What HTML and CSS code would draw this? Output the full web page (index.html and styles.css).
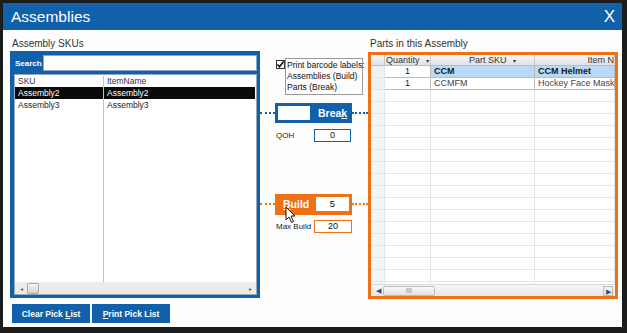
FILE: index.html
```html
<!DOCTYPE html>
<html lang="en">
<head>
  <meta charset="UTF-8">
  <title>Assemblies</title>
  <link rel="stylesheet" href="styles.css">
</head>
<body>
  <div class="window">
    <div class="titlebar">
      <span class="title">Assemblies</span>
      <span class="close">X</span>
    </div>
    <div class="content">
      <div class="left-col">
        <div class="section-label">Assembly SKUs</div>
        <div class="sku-box">
          <div class="search-row">
            <span class="search-label">Search</span>
            <div class="search-input"></div>
          </div>
          <div class="sku-list">
            <div class="sku-rows">
              <div class="sku-row head"><span class="c1">SKU</span><span class="c2">ItemName</span></div>
              <div class="sku-row selected"><span class="c1">Assembly2</span><span class="c2">Assembly2</span></div>
              <div class="sku-row"><span class="c1">Assembly3</span><span class="c2">Assembly3</span></div>
              <div class="sku-fill"><span class="c1"></span><span class="c2"></span></div>
            </div>
            <div class="hscroll">
              <span class="arrow">&#9666;</span>
              <span class="thumb small"></span>
              <span class="track"></span>
              <span class="arrow">&#9656;</span>
            </div>
          </div>
        </div>
        <div class="buttons">
          <button class="btn">Clear Pick <u>L</u>ist</button>
          <button class="btn"><u>P</u>rint Pick List</button>
        </div>
      </div>

      <div class="mid-col">
        <div class="print-opt">
          <span class="checkbox">
            <svg width="9" height="9" viewBox="0 0 9 9"><path d="M1.5 4.5 L3.5 6.8 L7.6 1.6" fill="none" stroke="#111" stroke-width="1.6"/></svg>
          </span>
          <div class="print-label">Print barcode labels:<br>Assemblies (Build)<br>Parts (Break)</div>
        </div>

        <div class="action-row blue">
          <span class="dots"></span>
          <div class="action-box">
            <div class="action-input"></div>
            <span class="action-text">Brea<u>k</u></span>
          </div>
          <span class="dots"></span>
        </div>
        <div class="field-row">
          <span class="field-label">QOH</span>
          <div class="field-box blue">0</div>
        </div>

        <div class="action-row orange">
          <span class="dots"></span>
          <div class="action-box">
            <span class="action-text"><u>B</u>uild</span>
            <div class="action-input">5</div>
            <svg class="cursor" width="12" height="18" viewBox="0 0 12 18"><path d="M1 1 L1 14 L4 11 L6.5 16.5 L8.5 15.5 L6 10 L10 10 Z" fill="#fff" stroke="#111" stroke-width="1"/></svg>
          </div>
          <span class="dots"></span>
        </div>
        <div class="field-row">
          <span class="field-label">Max Build</span>
          <div class="field-box orange">20</div>
        </div>
      </div>

      <div class="right-col">
        <div class="section-label">Parts in this Assembly</div>
        <div class="parts-box">
          <div class="grid">
            <div class="grid-row grid-head">
              <span class="rh corner"></span>
              <span class="qty">Quantity <i>&#9662;</i></span>
              <span class="psku">Part SKU <i>&#9662;</i></span>
              <span class="iname">Item N</span>
            </div>
            <div class="grid-row data current">
              <span class="rh"></span><span class="qty">1</span><span class="psku">CCM</span><span class="iname">CCM Helmet</span>
            </div>
            <div class="grid-row data">
              <span class="rh"></span><span class="qty">1</span><span class="psku">CCMFM</span><span class="iname">Hockey Face Mask - CCM</span>
            </div>
            <div class="grid-row empty"><span class="rh"></span><span class="qty"></span><span class="psku"></span><span class="iname"></span></div>
            <div class="grid-row empty"><span class="rh"></span><span class="qty"></span><span class="psku"></span><span class="iname"></span></div>
            <div class="grid-row empty"><span class="rh"></span><span class="qty"></span><span class="psku"></span><span class="iname"></span></div>
            <div class="grid-row empty"><span class="rh"></span><span class="qty"></span><span class="psku"></span><span class="iname"></span></div>
            <div class="grid-row empty"><span class="rh"></span><span class="qty"></span><span class="psku"></span><span class="iname"></span></div>
            <div class="grid-row empty"><span class="rh"></span><span class="qty"></span><span class="psku"></span><span class="iname"></span></div>
            <div class="grid-row empty"><span class="rh"></span><span class="qty"></span><span class="psku"></span><span class="iname"></span></div>
            <div class="grid-row empty"><span class="rh"></span><span class="qty"></span><span class="psku"></span><span class="iname"></span></div>
            <div class="grid-row empty"><span class="rh"></span><span class="qty"></span><span class="psku"></span><span class="iname"></span></div>
            <div class="grid-row empty"><span class="rh"></span><span class="qty"></span><span class="psku"></span><span class="iname"></span></div>
            <div class="grid-row empty"><span class="rh"></span><span class="qty"></span><span class="psku"></span><span class="iname"></span></div>
            <div class="grid-row empty"><span class="rh"></span><span class="qty"></span><span class="psku"></span><span class="iname"></span></div>
            <div class="grid-row empty"><span class="rh"></span><span class="qty"></span><span class="psku"></span><span class="iname"></span></div>
            <div class="grid-row empty"><span class="rh"></span><span class="qty"></span><span class="psku"></span><span class="iname"></span></div>
            <div class="grid-row empty"><span class="rh"></span><span class="qty"></span><span class="psku"></span><span class="iname"></span></div>
            <div class="grid-row empty"><span class="rh"></span><span class="qty"></span><span class="psku"></span><span class="iname"></span></div>
            <div class="grid-row empty"><span class="rh"></span><span class="qty"></span><span class="psku"></span><span class="iname"></span></div>
          </div>
          <div class="hscroll grid-scroll">
            <span class="arrow dark">&#9664;</span>
            <span class="thumb wide"><i></i></span>
            <span class="track"></span>
            <span class="arrow dark boxed">&#9654;</span>
          </div>
        </div>
      </div>
    </div>
  </div>
</body>
</html>
```

FILE: styles.css
```css
* {
  box-sizing: border-box;
}
body {
  margin: 0;
  width: 627px;
  height: 333px;
  overflow: hidden;
  background-color: #1c1c1c;
  font-family: "Liberation Sans", Arial, sans-serif;
}
.window {
  width: 627px;
  height: 333px;
  border-style: solid;
  border-color: #1c1c1c;
  border-width: 3px 5px 6px 3px;
  background-color: #fdfdfd;
  display: flex;
  flex-direction: column;
}
.titlebar {
  height: 27px;
  background-color: #1160aa;
  color: white;
  display: flex;
  align-items: center;
  justify-content: space-between;
  padding: 0 7px 0 8px;
}
.title {
  font-size: 15.5px;
}
.close {
  font-size: 17px;
}
.content {
  flex: 1;
  display: flex;
  padding: 6px 2px 3px 7px;
}
.section-label {
  font-size: 10px;
  color: #333;
  height: 15px;
  line-height: 15px;
  padding-left: 2px;
}

/* left side */
.left-col {
  width: 250px;
  display: flex;
  flex-direction: column;
}
.sku-box {
  height: 247px;
  border: 3px solid #1160aa;
  background-color: #1160aa;
  display: flex;
  flex-direction: column;
}
.search-row {
  display: flex;
  align-items: center;
  height: 18px;
  margin-bottom: 2px;
}
.search-label {
  width: 30px;
  color: white;
  font-size: 8px;
  font-weight: bold;
  padding-left: 2px;
  white-space: nowrap;
}
.search-input {
  flex: 1;
  height: 16px;
  background-color: white;
  border: 1px solid #8aa7c8;
}
.sku-list {
  flex: 1;
  background-color: white;
  border: 1px solid #9ab;
  display: flex;
  flex-direction: column;
  margin-left: 1px;
}
.sku-rows {
  flex: 1;
  display: flex;
  flex-direction: column;
  padding-top: 1px;
}
.sku-row {
  display: flex;
  height: 12px;
  line-height: 12px;
  font-size: 8.5px;
  color: #222;
}
.sku-row.head {
  height: 11px;
  line-height: 11px;
  color: #333;
}
.sku-row.selected {
  background-color: #0a0a0a;
  color: white;
  margin-right: 1px;
}
.sku-fill {
  flex: 1;
  display: flex;
}
.c1 {
  width: 89px;
  padding-left: 3px;
  border-right: 1px solid #c4c4c4;
}
.c2 {
  padding-left: 3px;
}
.hscroll {
  height: 12px;
  background-color: #ebebeb;
  display: flex;
  align-items: center;
  font-size: 6px;
  color: #666;
}
.hscroll .arrow {
  width: 12px;
  text-align: center;
}
.hscroll .track {
  flex: 1;
}
.thumb.small {
  width: 12px;
  height: 11px;
  border: 1px solid #aaa;
  border-radius: 2px;
  background: linear-gradient(#f4f4f4, #d4d4d4);
}
.buttons {
  display: flex;
  gap: 2px;
  margin-top: 6px;
  padding-left: 2px;
}
.btn {
  width: 78px;
  height: 19px;
  padding: 0;
  border: none;
  background-color: #1160aa;
  color: white;
  font-family: "Liberation Sans", Arial, sans-serif;
  font-size: 8.5px;
  font-weight: bold;
}

/* middle */
.mid-col {
  width: 108px;
  display: flex;
  flex-direction: column;
  padding-top: 22px;
}
.print-opt {
  display: flex;
  align-items: flex-start;
  padding-left: 16px;
}
.checkbox {
  width: 9px;
  height: 9px;
  border: 1px solid #333;
  background: white;
  margin-top: 2px;
  display: flex;
}
.checkbox svg {
  margin: -1px;
}
.print-label {
  border: 1px solid #999;
  font-size: 8.5px;
  line-height: 11px;
  padding: 1px;
  color: #111;
  width: 78px;
  white-space: nowrap;
}
.action-row {
  display: flex;
  align-items: center;
  height: 20px;
}
.action-row.blue {
  margin-top: 8px;
}
.action-row.orange {
  margin-top: 52px;
}
.dots {
  width: 15px;
  height: 2px;
  border-top: 2px dotted #1160aa;
}
.orange .dots {
  border-top-color: #f07014;
}
.dots:last-child {
  width: 16px;
}
.action-box {
  width: 77px;
  height: 20px;
  display: flex;
  align-items: center;
  padding: 0 3px;
  position: relative;
}
.blue .action-box {
  background-color: #1160aa;
}
.orange .action-box {
  background-color: #f07014;
  height: 21px;
}
.action-input {
  height: 14px;
  background-color: white;
  font-size: 9.5px;
  text-align: center;
  line-height: 14px;
  color: #111;
}
.blue .action-input {
  width: 32px;
}
.orange .action-input {
  width: 33px;
  margin-left: auto;
}
.action-text {
  color: white;
  font-weight: bold;
  font-size: 10.5px;
}
.blue .action-text {
  margin-left: 8px;
}
.orange .action-text {
  margin-left: 5px;
}
.cursor {
  position: absolute;
  left: 10px;
  top: 12px;
}
.field-row {
  display: flex;
  align-items: center;
  height: 14px;
  margin-top: 5px;
  padding-left: 16px;
}
.field-label {
  font-size: 8px;
  color: #222;
  width: 38px;
  white-space: nowrap;
}
.field-box {
  width: 37px;
  height: 13px;
  font-size: 9px;
  text-align: center;
  line-height: 11px;
  background: white;
  color: #111;
}
.field-box.blue {
  border: 1px solid #1160aa;
}
.field-box.orange {
  border: 1px solid #f07014;
  width: 38px;
}

/* right side */
.right-col {
  width: 250px;
  display: flex;
  flex-direction: column;
}
.parts-box {
  height: 247px;
  margin-top: 1px;
  border: 3px solid #f07014;
  background-color: #f5f7fa;
  display: flex;
  flex-direction: column;
}
.grid {
  flex: 1;
  overflow: hidden;
  display: flex;
  flex-direction: column;
  background-color: white;
}
.grid-row {
  display: flex;
  height: 12px;
  flex-shrink: 0;
  font-size: 9px;
  line-height: 11px;
  color: #222;
  white-space: nowrap;
}
.grid-row span {
  overflow: hidden;
  border-right: 1px solid #e3e6ea;
  border-bottom: 1px solid #e3e6ea;
}
.rh {
  width: 14px;
  background-color: #eef2f7;
}
.qty {
  width: 46px;
  text-align: center;
}
.psku {
  width: 104px;
  padding-left: 3px;
}
.iname {
  flex: 1;
  padding-left: 3px;
}
.grid-head {
  height: 11px;
  line-height: 10px;
  color: #333;
}
.grid-head span {
  background: linear-gradient(#f6f7f9, #dde2e8);
  border-right: 1px solid #c8ccd2;
  border-bottom: 1px solid #b8bcc4;
}
.grid-head i {
  font-style: normal;
  font-size: 6px;
  margin-left: 4px;
}
.grid-head .psku {
  text-align: center;
  padding-left: 20px;
}
.grid-head .iname {
  text-align: right;
  padding-right: 0;
}
.data .qty,
.data .psku,
.data .iname {
  border-color: #bbb;
}
.data .qty {
  background-color: white;
}
.current .psku,
.current .iname {
  background-color: #b9d9f6;
  font-weight: bold;
  color: #1a1a1a;
}
.data:not(.current) .psku,
.data:not(.current) .iname {
  color: #444;
}
.empty .rh {
  background-color: #f2f5f9;
}
.grid-scroll {
  background: linear-gradient(#f7f7f7, #e6e6e6);
  border-top: 1px solid #d8d8d8;
  height: 12px;
  padding: 0 2px;
}
.grid-scroll .arrow {
  width: 10px;
  color: #2a4f80;
  font-size: 7px;
}
.arrow.boxed {
  border: 1px solid #bbb;
  height: 10px;
  line-height: 9px;
}
.thumb.wide {
  width: 52px;
  height: 10px;
  border: 1px solid #bbb;
  border-radius: 2px;
  background: linear-gradient(#fafafa, #e2e2e2);
  display: flex;
  align-items: center;
  justify-content: center;
}
.thumb.wide i {
  width: 6px;
  height: 5px;
  background-color: #c8c8c8;
}
```
